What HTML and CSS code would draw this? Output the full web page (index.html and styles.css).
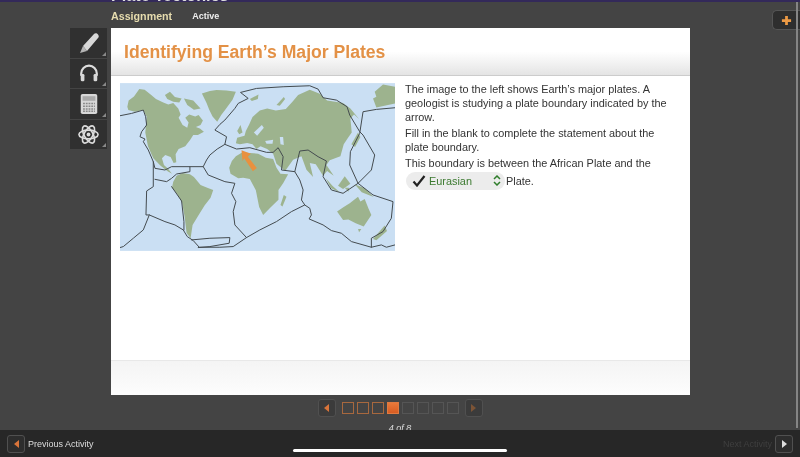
FILE: index.html
```html
<!DOCTYPE html>
<html lang="en">
<head>
<meta charset="utf-8">
<title>Identifying Earth's Major Plates</title>
<link rel="stylesheet" href="styles.css">
</head>
<body>
<div class="masthead"><span class="course-title">Plate Tectonics</span></div>
<div class="subhead"><span class="assign">Assignment</span><span class="active">Active</span></div>
<div class="stage">
  <nav class="tools">
    <div class="tool"><svg viewBox="0 0 24 24" width="24" height="24"><path class="ic" d="M6 15 17 3c1-1 3-1 4 .5s1 2.500 0 3.500L10 20z"/><path d="M3 22l3-7 4 5z" fill="#b5b5b5"/></svg></div>
    <div class="tool"><svg viewBox="0 0 24 24" width="22" height="22"><path d="M3.500 15v-2.500a8.500 8.500 0 0 1 17 0v2.500" fill="none" stroke="#ddd" stroke-width="2.400"/><rect class="ic" x="3" y="13" width="4" height="8" rx="1.500"/><rect class="ic" x="17" y="13" width="4" height="8" rx="1.500"/></svg></div>
    <div class="tool"><svg viewBox="0 0 24 24" width="22" height="22"><rect class="ic" x="3" y="1" width="18" height="22" rx="2"/><rect x="5" y="3.500" width="14" height="5" fill="#aaa"/><path d="M5.500 11.500h13M5.500 14.500h13M5.500 17.500h13M5.500 20h13" stroke="#888" stroke-width="1.600" stroke-dasharray="2 1"/></svg></div>
    <div class="tool"><svg viewBox="0 0 24 24" width="23" height="23"><g fill="none" stroke="#ddd" stroke-width="1.700"><ellipse cx="12" cy="12" rx="10" ry="4.500"/><ellipse cx="12" cy="12" rx="10" ry="4.500" transform="rotate(60 12 12)"/><ellipse cx="12" cy="12" rx="10" ry="4.500" transform="rotate(120 12 12)"/></g><circle cx="12" cy="12" r="2" fill="#ddd"/></svg></div>
  </nav>
  <main class="card">
    <header class="card-head"><h1>Identifying Earth’s Major Plates</h1></header>
    <section class="card-body">
      <svg class="map" viewBox="30 24 826 504" width="275" height="168">
        <rect x="30" y="24" width="826" height="504" fill="#cadff3"/>
        <g fill="#9db38e">
          <path d="M52 95 56 76 72 64 88 42 104 44 122 58 138 72 160 82 175 88 190 84 205 100 212 118 206 128 218 150 232 158 236 142 226 128 238 118 256 124 266 120 279 136 272 150 258 156 270 160 282 170 264 180 250 180 241 194 226 214 206 222 197 238 199 262 191 264 182 246 166 240 156 250 162 270 175 282 186 296 172 288 152 272 130 250 114 214 106 172 110 125 100 105 75 110 55 105Z"/>
          <path d="M165 60 180 50 195 66 215 70 208 82 190 80 172 72Z"/>
          <path d="M222 70 250 76 272 100 252 104 232 90Z"/>
          <path d="M276 55 300 48 320 45 350 46 378 50 368 74 346 104 334 120 322 140 308 124 298 104 290 84Z"/>
          <path d="M190 320 200 302 218 294 240 298 252 306 272 330 292 338 310 345 302 368 284 392 264 424 248 450 242 490 230 474 224 424 216 382 200 355 186 338Z"/>
          <path d="M358 278 366 258 378 244 398 232 420 234 445 236 468 248 490 252 500 278 512 296 535 298 520 325 506 345 506 374 482 398 460 420 448 396 438 346 420 312 400 308 385 310 362 296Z"/>
          <path d="M522 360 530 365 518 395 512 390Z"/>
          <path d="M378 205 382 188 404 182 408 168 418 148 428 126 450 106 472 100 498 106 528 102 548 80 565 60 600 44 630 56 652 76 700 84 722 100 748 132 733 118 722 130 726 172 714 190 702 208 692 244 676 250 660 256 650 270 672 302 652 288 640 302 618 268 600 264 610 306 590 284 575 244 550 254 526 288 500 266 490 236 472 222 452 214 440 222 428 208 412 204 390 208Z"/>
          <path d="M795 50 820 28 856 35 856 85 800 97 790 70 800 65Z"/>
          <path d="M682 410 702 396 720 385 745 365 752 380 765 372 776 400 785 420 762 455 738 445 716 434 700 435Z"/>
          <path d="M790 492 825 452 832 468 800 496Z"/>
          <path d="M745 462 755 462 748 472Z"/>
          <path d="M725 208 745 172 752 186 736 216Z"/>
          <path d="M648 310 668 332 690 352 664 340Z"/>
          <path d="M685 332 705 304 722 326 700 342Z"/>
          <path d="M735 328 765 340 792 366 756 352Z"/>
          <path d="M382 168 392 150 398 172 388 178Z"/>
          <path d="M420 72 446 58 444 72 426 78Z"/>
          <path d="M500 90 522 66 526 72 510 92Z"/>
          <path d="M705 338 718 338 716 350Z"/>
        </g>
        <g fill="#cadff3">
          <path d="M432 172 456 150 462 158 442 182Z"/>
          <path d="M466 198 490 194 488 206 470 206Z"/>
          <path d="M510 186 520 186 522 210 512 208Z"/>
        </g>
        <g fill="none" stroke="#434a4e" stroke-width="3" stroke-linejoin="round" stroke-linecap="round">
          <path d="M30 122 65 115 100 105 107 125 110 150 95 170 90 185 105 192 100 200 115 225 130 260 135 280 165 285 185 275 240 275 240 290 200 297 185 310 170 320 135 313"/>
          <path d="M130 260 130 335 110 348 108 420 118 420 165 440 195 450 220 465 232 485 250 497 268 517 330 517 370 515 410 488 450 465 500 440 545 410 585 390 600 400 605 420 598 432 640 450 665 467 695 475 725 500 785 517 815 510 830 517 856 510"/>
          <path d="M118 420 100 465 70 490 40 515 30 518"/>
          <path d="M185 335 215 378 222 440 222 465"/>
          <path d="M245 495 300 490 360 488 358 505 300 515 265 518"/>
          <path d="M240 275 280 275 290 255 300 240 322 222 345 208 350 185 315 165 330 148 345 135 375 100 385 85 415 70 392 52 440 40 520 35 600 32 625 42 640 68 680 75 712 95 720 120 750 170 760 180 795 240 785 285 745 325 720 270 722 230 750 175 760 110 800 103 856 98"/>
          <path d="M745 325 790 360 850 380 845 430 820 470 785 490 785 517"/>
          <path d="M280 275 295 300 345 320 375 325 365 355 378 380 370 410 375 450 410 488"/>
          <path d="M345 208 380 222 420 218 470 232 490 232 505 218 520 245 515 285 555 290 570 315 580 345 575 375 585 390"/>
          <path d="M555 290 570 228 595 225 625 245 650 258 640 305 665 345 700 355 745 325"/>
        </g>
        <path d="M395 226 423 236 414 245 441 279 429 289 403 250 398 258Z" fill="#e8913f"/>
      </svg>
      <div class="copy">
        <p>The image to the left shows Earth’s major plates. A geologist is studying a plate boundary indicated by the arrow.</p>
        <p>Fill in the blank to complete the statement about the plate boundary.</p>
        <p class="lead">This boundary is between the African Plate and the</p>
        <p class="answer-line"><span class="answer"><svg class="check" viewBox="0 0 14 12" width="14" height="12"><path d="M1.500 6.500 5 10.500 12.500 1" fill="none" stroke="#222" stroke-width="2.200"/></svg><span class="word">Eurasian</span><svg class="updown" viewBox="0 0 8 11" width="8" height="11"><path d="M1 4 4 1 7 4M1 7 4 10 7 7" fill="none" stroke="#2f7d2b" stroke-width="1.500"/></svg></span><span>Plate.</span></p>
      </div>
    </section>
    <div class="card-foot"></div>
  </main>
</div>
<div class="pager">
  <span class="navbtn"><i class="tri-l"></i></span>
  <span class="sq done"></span><span class="sq done"></span><span class="sq done"></span><span class="sq cur"></span><span class="sq"></span><span class="sq"></span><span class="sq"></span><span class="sq"></span>
  <span class="navbtn"><i class="tri-r"></i></span>
</div>
<div class="count">4 of 8</div>
<footer class="bottom">
  <div class="bot-side"><span class="navbtn"><i class="tri-l"></i></span><span>Previous Activity</span></div>
  <div class="bot-side next"><span>Next Activity</span><span class="navbtn"><i class="tri-w"></i></span></div>
</footer>
<div class="add"><svg viewBox="0 0 12 12" width="11" height="11"><path d="M6 1v10M1 6h10" stroke="#ec9a45" stroke-width="3"/></svg></div>
<div class="scrollbar"></div>
<div class="home-bar"></div>
</body>
</html>
```
FILE: styles.css
```css
* { box-sizing: border-box; }
html { margin: 0; height: 100%; background: #444; }
body {
  margin: 0;
  width: 800px; height: 457px; overflow: hidden; position: relative;
  background: #444;
  font-family: "Liberation Sans", Arial, sans-serif;
  display: flex; flex-direction: column;
  filter: blur(.3px);
}
.masthead {
  height: 4px; flex: none; overflow: hidden; padding-left: 111px;
  background: linear-gradient(#33295a 2px, #444 2px);
}
.course-title {
  display: block; margin-top: -12px;
  color: #ddd; font-size: 16.200px; font-weight: bold; line-height: 15px;
}
.subhead { height: 24px; flex: none; padding: 0 0 0 111px; display: flex; align-items: center; gap: 20px; }
.assign { color: #e6dcae; font-size: 10.700px; font-weight: bold; }
.active { color: #eee; font-size: 9px; font-weight: bold; }
.stage { height: 367px; flex: none; display: flex; padding-left: 70px; }
.tools { width: 37px; height: 122px; display: flex; flex-direction: column; margin-right: 4px; }
.tool {
  height: 30.500px; display: flex; align-items: center; justify-content: center; position: relative;
  border-bottom: 1px solid #444; background: #303030;
}
.tool::after {
  content: ""; position: absolute; right: 1px; bottom: 2px;
  border-style: solid; border-width: 0 0 4px 4px; border-color: transparent transparent #888 transparent;
}
.ic { fill: #d8d8d8; }
.card { width: 579px; background: #fff; display: flex; flex-direction: column; }
.card-head {
  height: 48px; flex: none; padding: 14px 0 0 13px;
  background: linear-gradient(#fff 50%, #e4e4e4);
  border-bottom: 1px solid #ccc;
}
h1 { margin: 0; color: #e39146; font-size: 17.600px; font-weight: bold; line-height: 20px; }
.card-body { flex: 1; padding: 6px 0 0 9px; display: flex; gap: 10px; align-items: flex-start; }
.map { flex: none; display: block; margin-top: 1px; }
.copy { width: 268px; color: #333; font-size: 10.900px; line-height: 14px; }
.copy p { margin: 0 0 2px; }
.copy .lead { margin: 1px 0 1.500px; }
.copy .answer-line { margin: 0 0 0 1px; display: flex; align-items: center; gap: 1px; }
.answer {
  width: 99px; height: 18px; border-radius: 9px; background: #ececec;
  display: flex; align-items: center; padding-left: 6px;
}
.check { flex: none; }
.word { color: #3c7a30; margin-left: 3px; width: 64px; }
.updown { flex: none; }
.card-foot { height: 35px; flex: none; background: linear-gradient(#f4f4f4, #fdfdfd); border-top: 1px solid #e8e8e8; }
.add {
  position: absolute; top: 10px; right: 0; width: 28px; height: 20px;
  background: #2e2e2e; border: 1px solid #555; border-right: 0; border-radius: 5px 0 0 5px;
  display: flex; align-items: center; justify-content: center;
}
.scrollbar { position: absolute; top: 2px; right: 2px; width: 2px; height: 426px; background: #858585; }
.home-bar { position: absolute; left: 293px; top: 449px; width: 214px; height: 3px; border-radius: 2px; background: #fff; }
.pager { height: 18px; flex: none; margin-top: 4px; display: flex; align-items: center; justify-content: center; gap: 3px; }
.navbtn {
  width: 18px; height: 18px; flex: none; border: 1px solid #505050; border-radius: 3px; background: #2d2d2d;
  display: inline-flex; align-items: center; justify-content: center;
}
.pager .navbtn { background: #3b3b3b; }
.pager .navbtn:first-child { margin-right: 3px; }
.pager .navbtn:last-child { margin-left: 3px; }
.tri-l { border-style: solid; border-width: 4px 5px 4px 0; border-color: transparent #d9743a transparent transparent; }
.tri-r { border-style: solid; border-width: 4px 0 4px 5px; border-color: transparent transparent transparent #7c5436; }
.tri-w { border-style: solid; border-width: 4px 0 4px 5px; border-color: transparent transparent transparent #ddd; }
.sq { width: 12px; height: 12px; border: 1px solid #555; flex: none; }
.sq.done { border-color: #a8683e; }
.sq.cur { background: linear-gradient(#e8793a, #d85c22); border-color: #e07a40; }
.count { height: 6px; flex: none; margin-top: 7px; overflow: hidden; text-align: center; color: #ddd; font-size: 9px; line-height: 9px; font-style: italic; }
.bottom {
  flex: 1; background: #272727;
  display: flex; justify-content: space-between; align-items: center; padding: 0 7px;
  color: #ddd; font-size: 9px;
}
.bot-side { display: flex; align-items: center; gap: 3px; }
.next { color: #3f3f3f; }
```
